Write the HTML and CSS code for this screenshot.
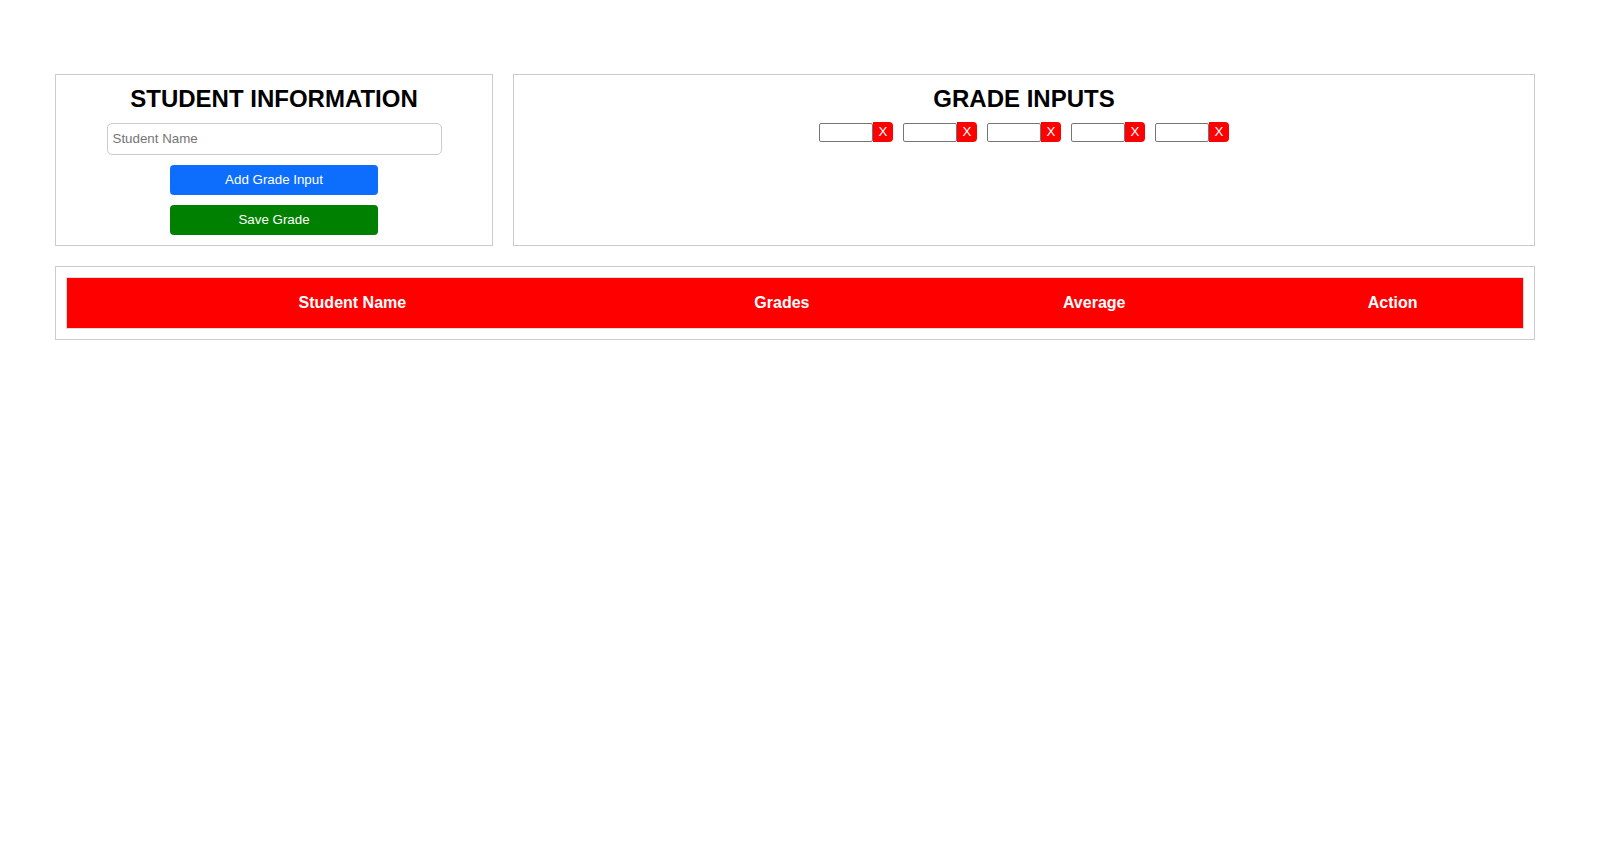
FILE: index.html
```html
<!DOCTYPE html>
<html lang="en">
<head>
<meta charset="utf-8">
<title>Student Grades</title>
<link rel="stylesheet" href="styles.css">
</head>
<body>
<div class="container">
  <div class="top-row">
    <section class="card info-card">
      <h2 class="card-title">STUDENT INFORMATION</h2>
      <input class="name-input" type="text" placeholder="Student Name">
      <button class="btn btn-blue" type="button">Add Grade Input</button>
      <button class="btn btn-green" type="button">Save Grade</button>
    </section>
    <section class="card grades-card">
      <h2 class="card-title">GRADE INPUTS</h2>
      <div class="grade-row">
        <div class="grade-item"><input class="grade-input" type="text"><button class="grade-remove" type="button">X</button></div>
        <div class="grade-item"><input class="grade-input" type="text"><button class="grade-remove" type="button">X</button></div>
        <div class="grade-item"><input class="grade-input" type="text"><button class="grade-remove" type="button">X</button></div>
        <div class="grade-item"><input class="grade-input" type="text"><button class="grade-remove" type="button">X</button></div>
        <div class="grade-item"><input class="grade-input" type="text"><button class="grade-remove" type="button">X</button></div>
      </div>
    </section>
  </div>
  <section class="card table-card">
    <table class="grade-table">
      <thead>
        <tr>
          <th class="col-name">Student Name</th>
          <th class="col-grades">Grades</th>
          <th class="col-avg">Average</th>
          <th class="col-action">Action</th>
        </tr>
      </thead>
      <tbody></tbody>
    </table>
  </section>
</div>
</body>
</html>
```

FILE: styles.css
```css
html, body {
  margin: 0;
  padding: 0;
  background: #ffffff;
  font-family: "Liberation Sans", Arial, sans-serif;
  color: #000;
}

.container {
  padding: 74px 62px 0 55px;
  display: flex;
  flex-direction: column;
  gap: 20px;
}

.top-row {
  display: grid;
  grid-template-columns: 3fr 7fr;
  gap: 20px;
}

.card {
  border: 1px solid #cccccc;
  padding: 10px;
  background: #fff;
}

.info-card {
  display: flex;
  flex-direction: column;
  align-items: center;
  gap: 10.5px;
}

.info-card .card-title {
  margin-bottom: -0.5px;
}

.grades-card {
  display: flex;
  flex-direction: column;
  align-items: center;
}

.card-title {
  margin: 0;
  font-size: 24px;
  font-weight: bold;
  line-height: 27.6px;
  text-align: center;
  color: #000;
}

.grades-card .card-title {
  margin-bottom: 9px;
}

.name-input {
  box-sizing: border-box;
  width: 335px;
  height: 32px;
  padding: 7px 5px;
  border: 1px solid #cccccc;
  border-radius: 5px;
  font-family: "Liberation Sans", Arial, sans-serif;
  font-size: 13.333px;
  outline: none;
}

.name-input::placeholder {
  color: #757575;
}

.btn {
  box-sizing: border-box;
  width: 50%;
  height: 29.5px;
  border: 0;
  border-radius: 4px;
  color: #fff;
  font-family: "Liberation Sans", Arial, sans-serif;
  font-size: 13.333px;
  padding: 0;
  cursor: pointer;
}

.btn-blue {
  background: #0d6efd;
}

.btn-green {
  background: #008000;
}

.grade-row {
  display: flex;
  justify-content: center;
  gap: 10px;
}

.grade-item {
  display: flex;
  align-items: flex-end;
}

.grade-input {
  box-sizing: border-box;
  width: 54px;
  height: 19px;
  border: 1px solid #767676;
  border-radius: 2px;
  padding: 1px 2px;
  font-size: 13.333px;
  outline: none;
}

.grade-remove {
  box-sizing: border-box;
  width: 20px;
  height: 20px;
  padding: 0;
  border: 0;
  border-radius: 0 4px 4px 0;
  background: #ff0000;
  color: #fff;
  font-family: "Liberation Sans", Arial, sans-serif;
  font-size: 13.333px;
  line-height: 20px;
  text-align: center;
  cursor: pointer;
}

.grade-table {
  width: 100%;
  border-collapse: collapse;
  table-layout: fixed;
  border: 1px solid #dddddd;
}

.grade-table th {
  background: #ff0000;
  color: #fff;
  font-size: 16px;
  font-weight: bold;
  padding: 16px 0;
  border: 0;
  text-align: center;
}

.col-name { width: 39.2%; }
.col-grades { width: 19.8%; }
.col-avg { width: 23.1%; }
.col-action { width: 17.9%; }
```
